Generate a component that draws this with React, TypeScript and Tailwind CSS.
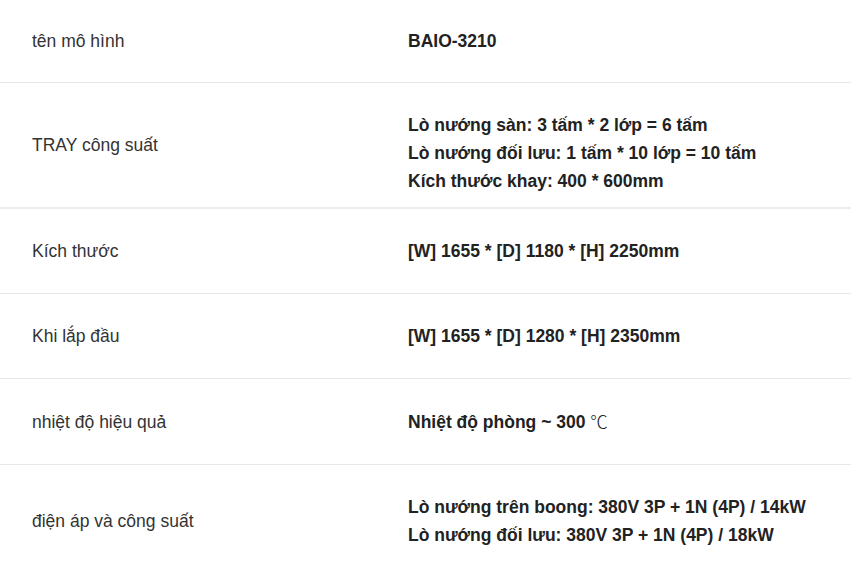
import React from 'react';

type Spec = {
  label: string;
  lines: React.ReactNode[];
  rowClass: string;
  valueClass: string;
};

const specs: Spec[] = [
  {
    label: 'tên mô hình',
    lines: ['BAIO-3210'],
    rowClass: 'border-b border-[#e8e8e8]',
    valueClass: 'py-[27px]',
  },
  {
    label: 'TRAY công suất',
    lines: [
      'Lò nướng sàn: 3 tấm * 2 lớp = 6 tấm',
      'Lò nướng đối lưu: 1 tấm * 10 lớp = 10 tấm',
      'Kích thước khay: 400 * 600mm',
    ],
    rowClass: 'border-b-2 border-[#ececec]',
    valueClass: 'pt-[28px] pb-[12px]',
  },
  {
    label: 'Kích thước',
    lines: ['[W] 1655 * [D] 1180 * [H] 2250mm'],
    rowClass: 'border-b border-[#e8e8e8]',
    valueClass: 'py-[28px]',
  },
  {
    label: 'Khi lắp đầu',
    lines: ['[W] 1655 * [D] 1280 * [H] 2350mm'],
    rowClass: 'border-b border-[#e8e8e8]',
    valueClass: 'py-[28px]',
  },
  {
    label: 'nhiệt độ hiệu quả',
    lines: [
      <>
        Nhiệt độ phòng ~ 300{' '}
        <span className="font-['Noto_Sans_CJK_SC',sans-serif] font-light">℃</span>
      </>,
    ],
    rowClass: 'border-b border-[#e8e8e8]',
    valueClass: 'py-[28px]',
  },
  {
    label: 'điện áp và công suất',
    lines: [
      'Lò nướng trên boong: 380V 3P + 1N (4P) / 14kW',
      'Lò nướng đối lưu: 380V 3P + 1N (4P) / 18kW',
    ],
    rowClass: '',
    valueClass: 'py-[28px]',
  },
];

export default function App() {
  return (
    <div className="min-h-screen w-[851px] bg-white font-['Liberation_Sans',Arial,'DejaVu_Sans',sans-serif] text-[17.5px] leading-[28px]">
      {specs.map((spec) => (
        <div key={spec.label} className={`grid grid-cols-[408px_1fr] ${spec.rowClass}`}>
          <div className="flex items-center pl-8 text-[#333333]">{spec.label}</div>
          <div className={`font-bold text-[#222222] ${spec.valueClass}`}>
            {spec.lines.map((line, i) => (
              <div key={i}>{line}</div>
            ))}
          </div>
        </div>
      ))}
    </div>
  );
}
